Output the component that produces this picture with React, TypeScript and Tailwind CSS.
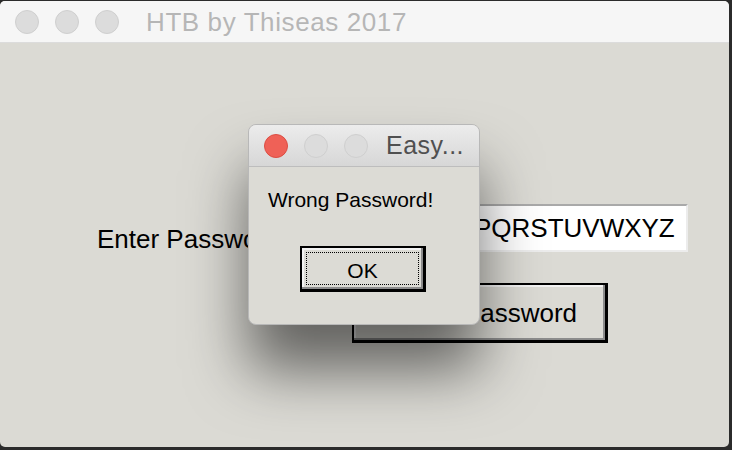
import React from 'react';

function Light({ color }: { color: 'red' | 'off' }) {
  return (
    <span
      className={`block w-6 h-6 rounded-full border ${
        color === 'red' ? 'bg-[#ef6157] border-[#dc4d43]' : 'bg-[#dcdcdc] border-[#cfcfcf]'
      }`}
    />
  );
}

export default function App() {
  return (
    <div className="relative w-[732px] h-[450px] bg-[#2b2b2b] overflow-hidden font-['Liberation_Sans',Arial,sans-serif]">
      {/* Main window */}
      <div className="mt-px w-[729px] h-[446px] rounded-[5px] overflow-hidden flex flex-col bg-[#dbdad4]">
        <div className="h-[42px] shrink-0 flex items-center bg-[#f6f6f6] border-b border-[#dcdcdc] pl-[15px]">
          <div className="flex gap-4">
            <Light color="off" />
            <Light color="off" />
            <Light color="off" />
          </div>
          <span className="ml-[27px] text-[26px] text-[#b6b6b6] tracking-[0.6px] leading-none">HTB by Thiseas 2017</span>
        </div>

        <div className="flex-1 pt-[161px] pl-[97px]">
          <div className="flex items-start h-[48px]">
            <span className="mt-[22px] shrink-0 whitespace-nowrap text-[26px] text-black leading-none">Enter Password:</span>
            <div className="ml-[10px] w-[390px] h-[48px] shrink-0 bg-white border-2 border-t-[#a9a9a9] border-l-[#a9a9a9] border-r-[#ececec] border-b-[#ececec] flex items-center justify-end pr-[11px]">
              <span className="whitespace-nowrap text-[26px] text-black leading-none">GHIJKLMNOPQRSTUVWXYZ</span>
            </div>
          </div>
          <div className="mt-[31px] ml-[255px] w-[256px] h-[60px] border-2 border-black border-r-[3px] border-b-[3px] bg-[#dbdad4] shadow-[inset_-2px_-2px_0_#8c8c8c,inset_2px_2px_0_#f2f2f2] flex items-center justify-center">
            <span className="text-[26px] text-black leading-none">Check Password</span>
          </div>
        </div>
      </div>

      {/* Dialog */}
      <div className="absolute left-[248px] top-[124px] w-[232px] h-[201px] rounded-[8px] border border-[#b8b8b8] bg-[#dcdbd5] shadow-[0_45px_60px_rgba(0,0,0,0.55)] overflow-hidden flex flex-col">
        <div className="h-[42px] shrink-0 flex items-center pl-[15px] bg-gradient-to-b from-[#ececec] to-[#d7d7d7] border-b border-[#bdbdbd]">
          <div className="flex gap-4">
            <Light color="red" />
            <Light color="off" />
            <Light color="off" />
          </div>
          <span className="ml-[18px] text-[25px] tracking-[0.5px] text-[#505050] leading-none">Easy...</span>
        </div>
        <div className="flex-1 flex flex-col">
          <span className="mt-[22px] ml-[19px] text-[21px] text-black leading-none">Wrong Password!</span>
          <div className="mt-[36px] ml-[51px] w-[126px] h-[46px] border-2 border-black border-r-[3px] border-b-[3px] bg-[#dcdbd5] shadow-[inset_-2px_-2px_0_#8c8c8c,inset_2px_2px_0_#f2f2f2] p-[4px]">
            <div className="w-full h-full border border-dotted border-black flex items-center justify-center pt-[3px]">
              <span className="text-[21px] text-black leading-none">OK</span>
            </div>
          </div>
        </div>
      </div>
    </div>
  );
}
